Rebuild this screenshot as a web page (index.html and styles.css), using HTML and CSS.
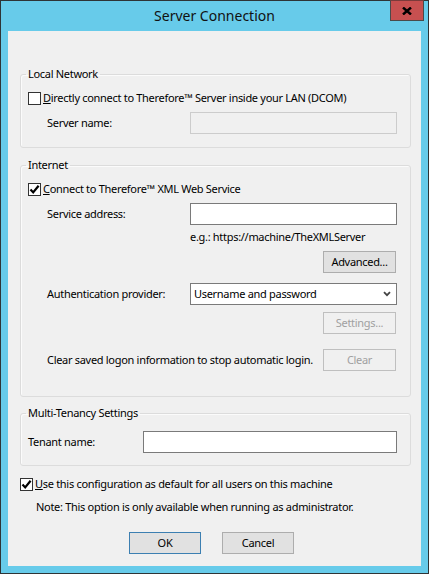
FILE: index.html
```html
<!DOCTYPE html>
<html lang="en">
<head>
<meta charset="utf-8">
<title>Server Connection</title>
<link rel="stylesheet" href="styles.css">
</head>
<body>
<div class="window">
  <div class="titlebar">
    <span class="title">Server Connection</span>
    <span class="close"><svg width="10" height="8" viewBox="0 0 10 8"><path d="M1 0.5 L9 7.5 M9 0.5 L1 7.5" stroke="#000" stroke-width="2.4" fill="none"/></svg></span>
  </div>
  <div class="client">
    <fieldset class="group group-local">
      <legend>Local Network</legend>
      <div class="check in-group"><span class="box"></span><span><u>D</u>irectly connect to Therefore™ Server inside your LAN (DCOM)</span></div>
      <div class="row indent row-server"><span class="lbl">Server name:</span><span class="field disabled"></span></div>
    </fieldset>

    <fieldset class="group group-internet">
      <legend>Internet</legend>
      <div class="check in-group"><span class="box"><svg width="11" height="11" viewBox="0 0 11 11"><path d="M1.5 5.5 L4.2 8.4 L9.6 1.8" stroke="#000" stroke-width="2.2" fill="none"/></svg></span><span><u>C</u>onnect to Therefore™ XML Web Service</span></div>
      <div class="row indent row-service"><span class="lbl">Service address:</span><span class="field"></span></div>
      <div class="hint">e.g.: https://machine/TheXMLServer</div>
      <div class="btnrow row-advanced"><span class="btn">Advanced...</span></div>
      <div class="row indent row-auth"><span class="lbl">Authentication provider:</span><span class="field select"><span>Username and password</span><svg width="8" height="6" viewBox="0 0 8 6"><path d="M1 1.2 L4 4.2 L7 1.2" stroke="#444" stroke-width="1.8" fill="none"/></svg></span></div>
      <div class="btnrow row-settings"><span class="btn disabled">Settings...</span></div>
      <div class="row clearrow"><span>Clear saved logon information to stop automatic login.</span><span class="btn disabled">Clear</span></div>
    </fieldset>

    <fieldset class="group group-tenant">
      <legend>Multi-Tenancy Settings</legend>
      <div class="row tenantrow"><span class="lbl">Tenant name:</span><span class="field"></span></div>
    </fieldset>

    <div class="check default-check"><span class="box"><svg width="11" height="11" viewBox="0 0 11 11"><path d="M1.5 5.5 L4.2 8.4 L9.6 1.8" stroke="#000" stroke-width="2.2" fill="none"/></svg></span><span><u>U</u>se this configuration as default for all users on this machine</span></div>
    <div class="note">Note: This option is only available when running as administrator.</div>

    <div class="actions"><span class="btn default">OK</span><span class="btn">Cancel</span></div>
  </div>
</div>
</body>
</html>
```
FILE: styles.css
```css
html, body {
  margin: 0;
  padding: 0;
}
body {
  font-family: "Noto Sans", "Open Sans", sans-serif;
  font-size: 11px;
  line-height: 16px;
  letter-spacing: -0.3px;
  color: #000;
  background: #ffffff;
  white-space: nowrap;
}
.window {
  width: 429px;
  height: 574px;
  box-sizing: border-box;
  border: 1px solid #2e3436;
  background: #67cbea;
  display: flex;
  flex-direction: column;
  padding: 0 7px 7px 7px;
}
.titlebar {
  height: 30px;
  flex: none;
  display: grid;
  grid-template-columns: 1fr auto 1fr;
  margin: 0 -7px;
}
.title {
  grid-column: 2;
  font-size: 14px;
  line-height: 30px;
  letter-spacing: 0;
  color: #111;
}
.close {
  grid-column: 3;
  justify-self: end;
  align-self: start;
  margin-top: -1px;
  margin-right: 4px;
  width: 34px;
  height: 21px;
  box-sizing: border-box;
  background: #c75050;
  border: 1px solid #4a4a4a;
  border-top-color: #7b3a3a;
  display: flex;
  align-items: center;
  justify-content: center;
}
.client {
  flex: 1;
  background: #f0f0f0;
  padding: 35px 10px 0 12px;
  display: flex;
  flex-direction: column;
}
.group {
  margin: 0;
  padding: 0;
  border: 1px solid #dcdcdc;
  border-radius: 3px;
  box-shadow: inset 1px 1px 0 #fbfbfb;
  min-width: 0;
}
.group legend {
  margin-left: 5px;
  padding: 0 2px;
  line-height: 16px;
}
.group-local { padding-bottom: 13px; }
.group-internet { margin-top: 9px; padding-bottom: 25px; }
.group-tenant { margin-top: 8px; padding-bottom: 12px; }

.check {
  display: flex;
  align-items: center;
  height: 16px;
  gap: 2px;
}
.check.in-group { margin: 8px 0 0 7px; }
.box {
  width: 13px;
  height: 13px;
  box-sizing: border-box;
  border: 1px solid #333;
  background: #fff;
  display: flex;
  align-items: center;
  justify-content: center;
  flex: none;
}
.row {
  display: flex;
  align-items: center;
}
.indent { margin-left: 26px; }
.indent .lbl { width: 143px; flex: none; }
.row-server, .row-service { margin-top: 6px; }
.row-auth { margin-top: 10px; }
.field {
  width: 207px;
  height: 22px;
  box-sizing: border-box;
  border: 1px solid #7a7a7a;
  background: #fff;
  flex: none;
}
.field.disabled {
  border-color: #cccccc;
  background: #f0f0f0;
}
.select {
  display: flex;
  align-items: center;
  justify-content: space-between;
  padding: 0 5px 0 3px;
}
.hint {
  margin: 4px 0 0 169px;
}
.btnrow {
  display: flex;
  justify-content: flex-end;
  width: 375px;
}
.row-advanced { margin-top: 6px; }
.row-settings { margin-top: 7px; }
.btn {
  width: 73px;
  height: 22px;
  box-sizing: border-box;
  border: 1px solid #adadad;
  background: #e1e1e1;
  display: flex;
  align-items: center;
  justify-content: center;
  flex: none;
}
.btn.disabled {
  border-color: #bfbfbf;
  background: #f0f0f0;
  color: #a0a0a0;
}
.btn.default {
  border-color: #3c7fb1;
}
.clearrow {
  margin: 15px 0 0 26px;
  width: 349px;
  justify-content: space-between;
}
.tenantrow {
  margin: 10px 0 0 7px;
}
.tenantrow .lbl { width: 115px; flex: none; }
.tenantrow .field { width: 254px; }
.default-check { margin-top: 10px; }
.note { margin: 7px 0 0 16px; }
.actions {
  display: flex;
  gap: 21px;
  margin: 17px 0 0 109px;
}
.actions .btn { width: 72px; }
```
